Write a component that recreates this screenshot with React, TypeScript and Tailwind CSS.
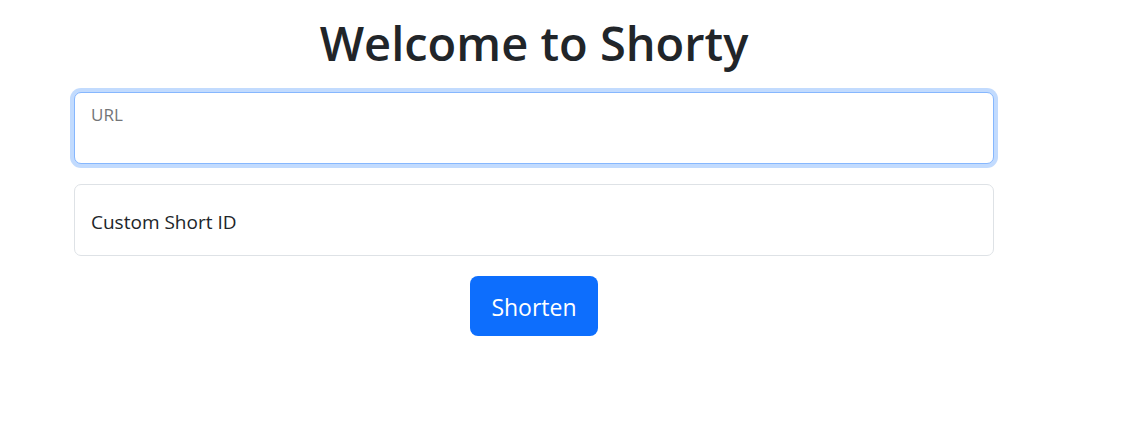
export default function App() {
  return (
    <main className="min-h-screen bg-white font-['Open_Sans',sans-serif] text-[#212529]">
      <div className="ml-[74px] flex w-[920px] flex-col items-center pt-[15px]">
        <h1 className="mb-[21px] h-[56px] text-[47px] font-semibold leading-[56px]">Welcome to Shorty</h1>

        {/* URL (focused) */}
        <div className="mb-[20px] h-[72px] w-full rounded-[7px] border border-[#86b7fe] bg-white px-[16px] pt-[9px] shadow-[0_0_0_4px_rgba(13,110,253,0.25)]">
          <span className="block text-[17px] leading-[1.5] text-[#737578]">URL</span>
        </div>

        {/* Custom short id */}
        <div className="mb-[20px] flex h-[72px] w-full items-center rounded-[7px] border border-[#dee2e6] bg-white px-[16px] pt-[4px]">
          <span className="text-[19px] leading-[1.5]">Custom Short ID</span>
        </div>

        <button className="flex h-[60px] w-[128px] items-center justify-center rounded-[8px] bg-[#0d6efd] pt-[2px] text-[23px] leading-[1.5] text-white">
          Shorten
        </button>
      </div>
    </main>
  );
}
